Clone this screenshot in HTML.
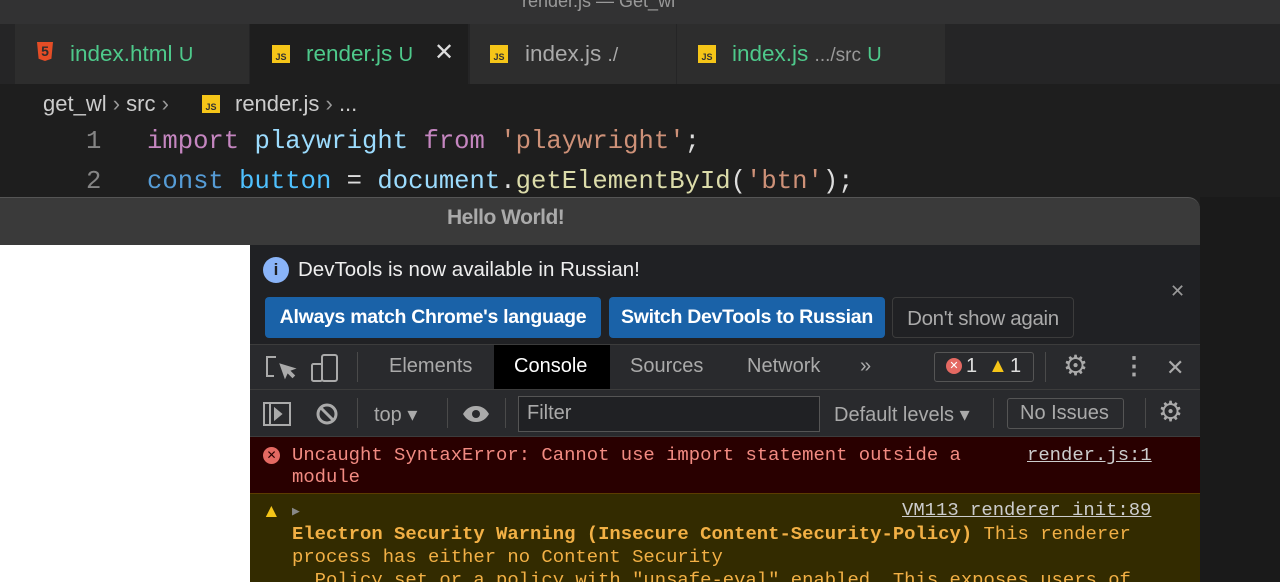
<!DOCTYPE html>
<html><head><meta charset="utf-8"><style>
*{margin:0;padding:0;box-sizing:border-box}
html,body{width:1280px;height:582px;overflow:hidden}
body{background:#1e1e1e;font-family:"Liberation Sans",sans-serif;position:relative}
.abs{position:absolute}
.mono{font-family:"Liberation Mono","DejaVu Sans Mono",monospace}
.js{position:absolute;top:21px;width:18px;height:18px;background:#f5c518;color:#333;font-size:9px;font-weight:bold;text-align:center;line-height:24px}
.tab{position:absolute;top:24px;height:60px;background:#2d2d2d}
.tt{position:absolute;top:17px;font-size:22.5px;white-space:nowrap;color:#4ec98b}
.btn{position:absolute;top:297px;height:41px;line-height:41px;font-size:19.5px;font-weight:bold;color:#fff;background:#1a62a8;border-radius:4px;text-align:center;white-space:nowrap;letter-spacing:-0.3px}
.ln{position:absolute;color:#858585}
</style></head><body>
<div class="abs" style="left:0;top:0;width:1280px;height:24px;background:#323233"></div>
<div class="abs" style="left:522px;top:-9px;color:#999;font-size:18px">render.js — Get_wl</div>
<div class="abs" style="left:0;top:24px;width:1280px;height:60px;background:#252526"></div>
<div class="tab" style="left:15px;width:234px"><span class="abs" style="left:22px;top:18px;width:16px;height:19px;background:#e44d26;color:#2d2d2d;font-weight:bold;font-size:14px;text-align:center;line-height:19px;clip-path:polygon(0 0,100% 0,90% 88%,50% 100%,10% 88%)">5</span><span class="tt" style="left:55px">index.html <span style="font-size:20px">U</span></span></div>
<div class="tab" style="left:250px;width:218px;background:#1e1e1e"><span class="js" style="left:22px">JS</span><span class="tt" style="left:56px">render.js <span style="font-size:20px">U</span></span><span class="abs" style="left:184px;top:14px;color:#ddd;font-size:24px">✕</span></div>
<div class="tab" style="left:470px;width:206px"><span class="js" style="left:20px">JS</span><span class="tt" style="left:55px;color:#aaa">index.js <span style="font-size:19px">./</span></span></div>
<div class="tab" style="left:677px;width:268px"><span class="js" style="left:21px">JS</span><span class="tt" style="left:55px">index.js <span style="font-size:19px;color:#999">.../src</span> <span style="font-size:20px">U</span></span></div>
<div class="abs" style="left:43px;top:91px;font-size:22px;color:#ccc;white-space:nowrap">get_wl <span style="color:#999">›</span> src <span style="color:#999">›</span></div>
<div class="abs" style="left:235px;top:91px;font-size:22px;color:#ccc;white-space:nowrap">render.js <span style="color:#999">›</span> ...</div>
<span class="js" style="left:202px;top:95px">JS</span>
<div class="abs mono" style="left:0;top:122px;width:1280px;font-size:25.6px;line-height:40px;white-space:pre">
<span class="ln" style="left:86px;top:0">1</span><span class="ln" style="left:86px;top:40px">2</span>
<span class="abs" style="left:147px;top:0;color:#ddd"><span style="color:#c586c0">import</span> <span style="color:#9cdcfe">playwright</span> <span style="color:#c586c0">from</span> <span style="color:#ce9178">'playwright'</span>;</span>
<span class="abs" style="left:147px;top:40px;color:#ddd"><span style="color:#569cd6">const</span> <span style="color:#4fc1ff">button</span> = <span style="color:#9cdcfe">document</span>.<span style="color:#dcdcaa">getElementById</span>(<span style="color:#ce9178">'btn'</span>);</span></div>
<div class="abs" style="left:1200px;top:197px;width:80px;height:385px;background:#1a1a1a"></div>
<div class="abs" style="left:0;top:197px;width:1200px;height:48px;background:#3a3a3a;border-top-right-radius:12px;border-top:1px solid #555"></div>
<div class="abs" style="left:447px;top:206px;font-size:21px;font-weight:bold;color:#aaa;letter-spacing:-0.5px">Hello World!</div>
<div class="abs" style="left:0;top:245px;width:250px;height:337px;background:#fff"></div>
<div class="abs" style="left:250px;top:245px;width:950px;height:337px;background:#202124"></div>
<div class="abs" style="left:263px;top:257px;width:26px;height:26px;border-radius:50%;background:#8ab4f8;color:#202124;font-weight:bold;text-align:center;line-height:26px;font-size:17px">i</div>
<div class="abs" style="left:298px;top:258px;font-size:20.5px;color:#eee">DevTools is now available in Russian!</div>
<div class="abs" style="left:1170px;top:281px;font-size:18px;color:#999">✕</div>
<div class="btn" style="left:265px;width:336px">Always match Chrome's language</div>
<div class="btn" style="left:609px;width:276px">Switch DevTools to Russian</div>
<div class="btn" style="left:892px;width:182px;background:#202124;border:1px solid #3c3c3c;color:#aaa;font-weight:normal;font-size:20.5px">Don't show again</div>
<div class="abs" style="left:250px;top:344px;width:950px;height:46px;background:#292a2d;border-top:1px solid #3c3c3c;border-bottom:1px solid #3c3c3c"></div>
<div class="abs" style="left:494px;top:345px;width:116px;height:44px;background:#000"></div>
<svg class="abs" style="left:262px;top:352px" width="80" height="32" viewBox="0 0 80 32" fill="none" stroke="#aaa" stroke-width="2"><path d="M14 5H5V24h7"/><path d="M18 12l5 14 2.5-5.5 5 5 2-2-5-5 5.5-2z" fill="#aaa" stroke-width="1"/><rect x="60" y="3" width="15" height="26" rx="2"/><rect x="50" y="12" width="10" height="17" rx="1.5"/></svg>
<div class="abs" style="left:357px;top:352px;width:1px;height:30px;background:#4a4a4a"></div>
<div class="abs" style="left:0;top:355px;width:1200px;font-size:20px;color:#aaa">
<span class="abs" style="left:389px">Elements</span><span class="abs" style="left:514px;color:#fff">Console</span><span class="abs" style="left:630px">Sources</span><span class="abs" style="left:747px">Network</span><span class="abs" style="left:860px">»</span>
<span class="abs" style="left:934px;top:-3px;width:100px;height:30px;border:1px solid #555;border-radius:3px"></span>
<span class="abs" style="left:946px;top:3px;width:16px;height:16px;border-radius:50%;background:#e46962;color:#fff;font-size:11px;text-align:center;line-height:16px">✕</span><span class="abs" style="left:966px;color:#ddd">1</span>
<span class="abs" style="left:988px;color:#f5c518">▲</span><span class="abs" style="left:1010px;color:#ddd">1</span>
<span class="abs" style="left:1045px;top:-3px;width:1px;height:30px;background:#4a4a4a"></span>
<span class="abs" style="left:1063px;font-size:28px;top:-6px">⚙</span><span class="abs" style="left:1122px;font-weight:bold;font-size:24px;top:-3px">⋮</span><span class="abs" style="left:1166px;font-size:22px">✕</span></div>
<div class="abs" style="left:250px;top:390px;width:950px;height:47px;background:#292a2d;border-bottom:1px solid #3c3c3c"></div>
<div class="abs" style="left:518px;top:396px;width:302px;height:36px;background:#202124;border:1px solid #555"></div>
<svg class="abs" style="left:262px;top:400px" width="230" height="28" viewBox="0 0 230 28" fill="none" stroke="#aaa" stroke-width="2"><rect x="2" y="3" width="26" height="22"/><path d="M8 3v22" /><path d="M13 9l6 5-6 5z" fill="#aaa"/><circle cx="65" cy="14" r="9" stroke-width="3"/><path d="M58 7l14 14" stroke-width="3"/><path d="M227 14c-3-5-7-8-13-8s-10 3-13 8c3 5 7 8 13 8s10-3 13-8z" fill="#aaa" stroke="none"/><circle cx="214" cy="14" r="4" fill="#292a2d" stroke="none"/></svg>
<div class="abs" style="left:357px;top:398px;width:1px;height:30px;background:#4a4a4a"></div>
<div class="abs" style="left:447px;top:398px;width:1px;height:30px;background:#4a4a4a"></div>
<div class="abs" style="left:505px;top:398px;width:1px;height:30px;background:#4a4a4a"></div>
<div class="abs" style="left:0;top:402px;width:1280px;font-size:20px;color:#aaa">
<span class="abs" style="left:374px">top ▾</span>
<span class="abs" style="left:527px">Filter</span><span class="abs" style="left:834px">Default levels ▾</span>
<span class="abs" style="left:993px;top:-4px;width:1px;height:30px;background:#4a4a4a"></span>
<span class="abs" style="left:1007px;top:-4px;width:117px;height:31px;border:1px solid #555;border-radius:3px"></span><span class="abs" style="left:1020px">No Issues</span>
<span class="abs" style="left:1145px;top:-4px;width:1px;height:30px;background:#4a4a4a"></span>
<span class="abs" style="left:1158px;font-size:28px;top:-7px">⚙</span></div>
<div class="abs mono" style="left:250px;top:437px;width:950px;height:57px;background:#290000;border-bottom:1px solid #5c3c00;color:#f28b82;font-size:18.9px;line-height:22px;padding:7px 0 0 42px">Uncaught SyntaxError: Cannot use import statement outside a<br>module
<span class="abs" style="left:13px;top:10px;width:17px;height:17px;border-radius:50%;background:#e46962;color:#290000;font-size:12px;line-height:17px;text-align:center;font-family:'Liberation Sans'">✕</span>
<span class="abs" style="left:777px;top:7px;color:#ccc;text-decoration:underline">render.js:1</span></div>
<div class="abs mono" style="left:250px;top:494px;width:950px;height:88px;background:#332b00;color:#f2b045;font-size:18.9px;line-height:23px;padding:5px 0 0 42px;white-space:pre"><span style="color:#888;font-size:13px">▶</span>
<b>Electron Security Warning (Insecure Content-Security-Policy)</b> This renderer
process has either no Content Security
  Policy set or a policy with "unsafe-eval" enabled. This exposes users of
<span class="abs" style="left:12px;top:6px;color:#f5c518;font-family:'Liberation Sans'">▲</span><span class="abs" style="left:652px;top:5px;color:#ccc;text-decoration:underline">VM113 renderer_init:89</span></div>
</body></html>
